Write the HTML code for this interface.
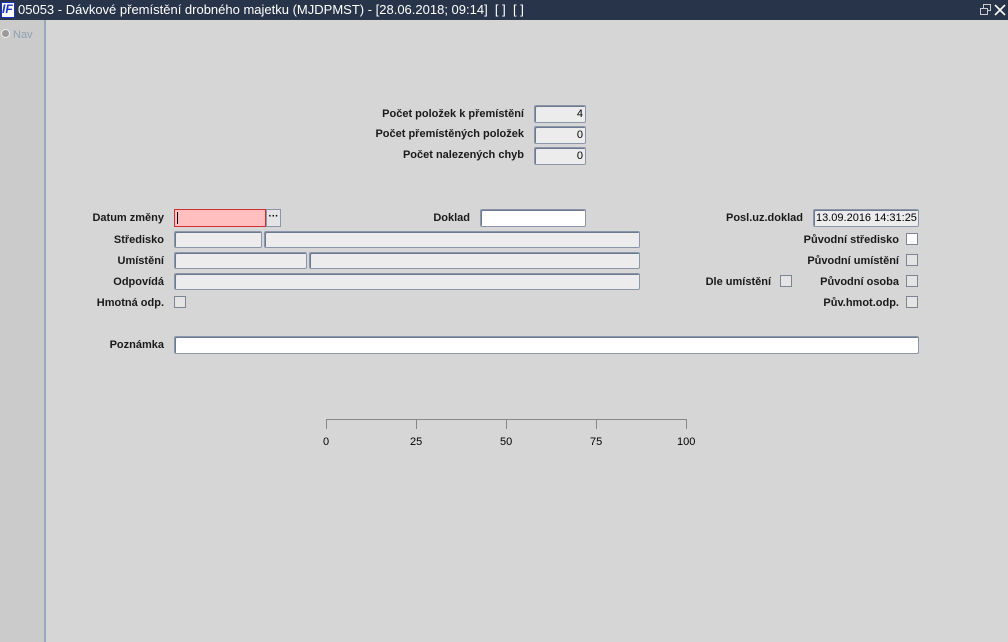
<!DOCTYPE html>
<html><head><meta charset="utf-8"><style>
*{margin:0;padding:0;box-sizing:border-box}
body{width:1008px;height:642px;overflow:hidden;background:#d6d6d6;font-family:"Liberation Sans",Arial,sans-serif;position:relative}
.a{position:absolute}
.lbl{position:absolute;font-size:11px;font-weight:bold;color:#1a1a1a;text-align:right;white-space:nowrap}
.f{position:absolute;background:#ececec;border:1px solid #8a97ab;border-radius:2px;box-shadow:inset 1px 1px 0 #6c7a90}
.w{background:#fff}
.cb{position:absolute;width:12px;height:12px;border:1px solid #7d8595;background:#e4e4e4}
.num{font-size:11px;text-align:right;padding-right:2px;line-height:16px;color:#000}
.t{position:absolute;font-size:11px;color:#000}
</style></head><body>
<div class="a" style="left:0;top:0;width:1008px;height:20px;background:#28344a"></div>
<div class="a" style="left:1px;top:2px;width:14px;height:16px;background:#fff;border:1px solid #1b34c8"></div>
<div class="a" style="left:2px;top:2px;font:italic bold 12px 'Liberation Sans';color:#1b34c8">IF</div>
<div class="a" style="left:18px;top:2px;font-size:13px;color:#fff;white-space:nowrap">05053 - Dávkové přemístění drobného majetku (MJDPMST) - [28.06.2018; 09:14]&nbsp; [ ]&nbsp; [ ]</div>
<svg class="a" style="left:980px;top:4px" width="12" height="12"><rect x="3.5" y="0.5" width="7" height="6" fill="none" stroke="#ccc"/><rect x="0.5" y="4.5" width="7" height="6" fill="#28344a" stroke="#ccc"/></svg>
<svg class="a" style="left:994px;top:4px" width="12" height="12"><path d="M1 1L11 11M11 1L1 11" stroke="#fff" stroke-width="1.6"/></svg>
<div class="a" style="left:0;top:20px;width:46px;height:622px;background:#cbcbcb;border-right:2px solid #9aa8bf"></div>
<div class="a" style="left:1px;top:29px;width:9px;height:9px;border-radius:50%;background:#9a9a9a;border:1px solid #eee"></div>
<div class="a" style="left:13px;top:29px;font-size:11px;color:#8ea0b0">Nav</div>

<div class="lbl" style="right:484px;top:108px">Počet položek k přemístění</div>
<div class="lbl" style="right:484px;top:128px">Počet přemístěných položek</div>
<div class="lbl" style="right:484px;top:149px">Počet nalezených chyb</div>
<div class="f num" style="left:534px;top:105px;width:52px;height:18px">4</div>
<div class="f num" style="left:534px;top:126px;width:52px;height:18px">0</div>
<div class="f num" style="left:534px;top:147px;width:52px;height:18px">0</div>

<div class="lbl" style="right:844px;top:212px">Datum změny</div>
<div class="a" style="left:174px;top:209px;width:92px;height:18px;background:#ffbfbf;border:1px solid #d23030"></div>
<div class="a" style="left:177px;top:212px;width:1px;height:12px;background:#000"></div>
<div class="a" style="left:266px;top:209px;width:15px;height:18px;background:#e4e4e4;border:1px solid #8a97ab;font-size:10px;font-weight:bold;text-align:center;line-height:14px">···</div>
<div class="lbl" style="right:538px;top:212px">Doklad</div>
<div class="f w" style="left:480px;top:209px;width:106px;height:18px"></div>
<div class="lbl" style="right:205px;top:212px">Posl.uz.doklad</div>
<div class="f" style="left:813px;top:209px;width:106px;height:18px;font-size:11px;line-height:16px;padding-left:2px">13.09.2016 14:31:25</div>

<div class="lbl" style="right:844px;top:234px">Středisko</div>
<div class="f" style="left:174px;top:231px;width:88px;height:17px"></div>
<div class="f" style="left:264px;top:231px;width:376px;height:17px"></div>
<div class="lbl" style="right:109px;top:234px">Původní středisko</div>
<div class="cb" style="left:906px;top:233px;background:#fff"></div>

<div class="lbl" style="right:844px;top:255px">Umístění</div>
<div class="f" style="left:174px;top:252px;width:133px;height:17px"></div>
<div class="f" style="left:309px;top:252px;width:331px;height:17px"></div>
<div class="lbl" style="right:109px;top:255px">Původní umístění</div>
<div class="cb" style="left:906px;top:254px"></div>

<div class="lbl" style="right:844px;top:276px">Odpovídá</div>
<div class="f" style="left:174px;top:273px;width:466px;height:17px"></div>
<div class="lbl" style="right:237px;top:276px">Dle umístění</div>
<div class="cb" style="left:780px;top:275px"></div>
<div class="lbl" style="right:109px;top:276px">Původní osoba</div>
<div class="cb" style="left:906px;top:275px"></div>

<div class="lbl" style="right:844px;top:297px">Hmotná odp.</div>
<div class="cb" style="left:174px;top:296px"></div>
<div class="lbl" style="right:109px;top:297px">Pův.hmot.odp.</div>
<div class="cb" style="left:906px;top:296px"></div>

<div class="lbl" style="right:844px;top:339px">Poznámka</div>
<div class="f w" style="left:174px;top:336px;width:745px;height:18px"></div>

<div class="a" style="left:326px;top:419px;width:361px;height:1px;background:#888"></div>
<div class="a" style="left:326px;top:419px;width:1px;height:10px;background:#888"></div>
<div class="a" style="left:416px;top:419px;width:1px;height:10px;background:#888"></div>
<div class="a" style="left:506px;top:419px;width:1px;height:10px;background:#888"></div>
<div class="a" style="left:596px;top:419px;width:1px;height:10px;background:#888"></div>
<div class="a" style="left:686px;top:419px;width:1px;height:10px;background:#888"></div>
<div class="t" style="left:323px;top:436px">0</div>
<div class="t" style="left:410px;top:436px">25</div>
<div class="t" style="left:500px;top:436px">50</div>
<div class="t" style="left:590px;top:436px">75</div>
<div class="t" style="left:677px;top:436px">100</div>
</body></html>
